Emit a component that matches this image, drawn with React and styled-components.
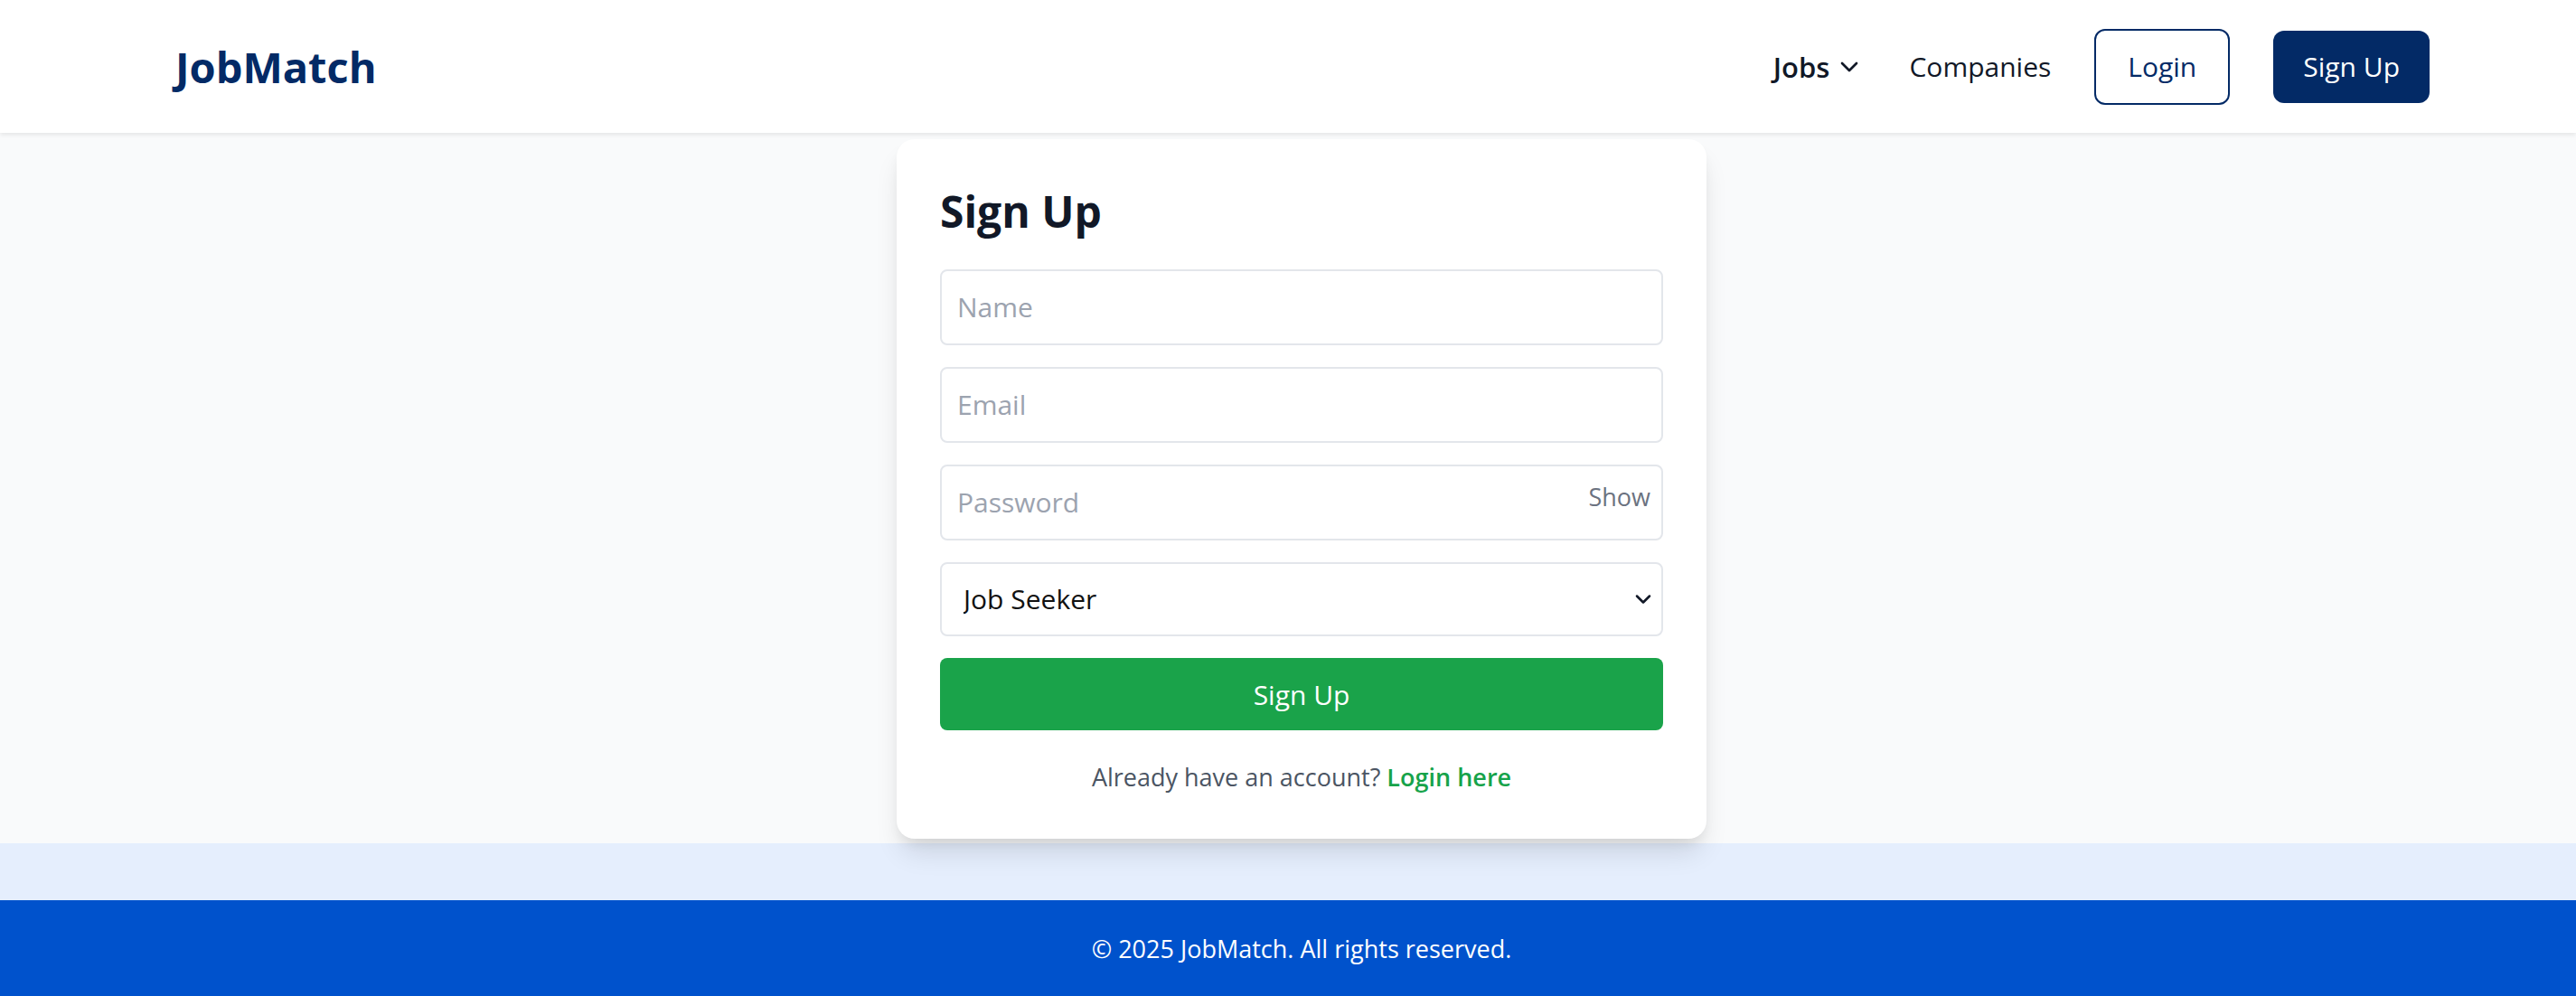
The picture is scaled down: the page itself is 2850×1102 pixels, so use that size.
import React, { useState } from "react";
import styled, { createGlobalStyle } from "styled-components";
import { ChevronDown } from "lucide-react";

const GlobalStyle = createGlobalStyle`
  body {
    margin: 0;
    font-family: "Open Sans", "Noto Sans", sans-serif;
    background: #e5eefd;
  }
  * { box-sizing: border-box; }
`;

const Page = styled.div`
  display: flex;
  flex-direction: column;
  height: 1102px;
  overflow: hidden;
`;

const Header = styled.header`
  flex: none;
  height: 147px;
  background: #fff;
  box-shadow: 0 2px 5px rgba(0, 0, 0, 0.09);
  display: flex;
  align-items: center;
  justify-content: space-between;
  padding: 0 162px 0 194px;
  position: relative;
  z-index: 2;
`;

const Logo = styled.div`
  font-size: 47px;
  font-weight: 700;
  color: #032a66;
`;

const Nav = styled.nav`
  display: flex;
  align-items: center;
  gap: 48px;
`;

const NavLink = styled.a`
  display: flex;
  align-items: center;
  gap: ${(p) => (p.$bold ? "6px" : "0")};
  font-size: ${(p) => (p.$bold ? "31px" : "30px")};
  color: #111827;
  font-weight: ${(p) => (p.$bold ? 600 : 400)};
  text-decoration: none;
  cursor: pointer;
  margin-right: ${(p) => (p.$bold ? "2px" : "0")};
`;

const NavButton = styled.button`
  font-family: inherit;
  font-size: 30px;
  line-height: 48px;
  padding: ${(p) => (p.$filled ? "16px 33px" : "16px 35px")};
  border-radius: 12px;
  border: ${(p) => (p.$filled ? "none" : "2px solid #032a66")};
  background: ${(p) => (p.$filled ? "#032a66" : "#fff")};
  color: ${(p) => (p.$filled ? "#fff" : "#032a66")};
  cursor: pointer;
`;

const Main = styled.main`
  flex: none;
  height: 786px;
  background: #f9fafb;
  display: flex;
  justify-content: center;
  align-items: flex-start;
  padding: 7px 0 0 30px;
`;

const Card = styled.div`
  position: relative;
  z-index: 1;
  width: 896px;
  background: #fff;
  border-radius: 20px;
  padding: 48px;
  box-shadow: 0 20px 30px -6px rgba(0, 0, 0, 0.12), 0 8px 14px -4px rgba(0, 0, 0, 0.07);
`;

const Title = styled.h2`
  margin: 0 0 32px;
  font-size: 48px;
  line-height: 64px;
  font-weight: 700;
  color: #111827;
`;

const Form = styled.form`
  display: flex;
  flex-direction: column;
  gap: 24px;
`;

const Field = styled.div`
  position: relative;
`;

const Input = styled.input`
  width: 100%;
  font-family: inherit;
  font-size: 30px;
  line-height: 48px;
  padding: 16px 17px;
  border: 2px solid #e3e6eb;
  border-radius: 8px;
  color: #111827;
  outline: none;
  &::placeholder { color: #9ca3af; }
`;

const ShowToggle = styled.span`
  position: absolute;
  right: 14px;
  top: 16px;
  font-size: 27px;
  line-height: 40px;
  color: #6b7280;
  cursor: pointer;
`;

const Select = styled.select`
  width: 100%;
  appearance: none;
  font-family: inherit;
  font-size: 30px;
  line-height: 48px;
  height: 82px;
  padding: 0 60px 0 24px;
  border: 2px solid #e3e6eb;
  border-radius: 8px;
  background: #fff;
  color: #111;
  outline: none;
`;

const SelectArrow = styled.span`
  position: absolute;
  right: 8px;
  top: 0;
  bottom: 0;
  display: flex;
  align-items: center;
  color: #111827;
  pointer-events: none;
`;

const SubmitButton = styled.button`
  height: 80px;
  border: none;
  border-radius: 8px;
  background: #1aa34a;
  color: #fff;
  font-family: inherit;
  font-size: 30px;
  cursor: pointer;
`;

const Bottom = styled.p`
  margin: 32px 0 0;
  text-align: center;
  font-size: 27px;
  line-height: 40px;
  color: #4b5563;
`;

const GreenLink = styled.a`
  color: #16a34a;
  font-weight: 600;
  text-decoration: none;
`;

const Band = styled.div`
  flex: none;
  height: 63px;
  background: #e5eefd;
`;

const Footer = styled.footer`
  flex: none;
  height: 106px;
  background: #0052cc;
  color: #fff;
  font-size: 27px;
  display: flex;
  align-items: center;
  justify-content: center;
  padding-left: 30px;
`;

export default function App() {
  const [show, setShow] = useState(false);

  return (
    <Page>
      <GlobalStyle />
      <Header>
        <Logo>JobMatch</Logo>
        <Nav>
          <NavLink $bold>
            Jobs
            <ChevronDown size={32} strokeWidth={2} />
          </NavLink>
          <NavLink>Companies</NavLink>
          <NavButton>Login</NavButton>
          <NavButton $filled>Sign Up</NavButton>
        </Nav>
      </Header>

      <Main>
        <Card>
          <Title>Sign Up</Title>
          <Form onSubmit={(e) => e.preventDefault()}>
            <Input type="text" placeholder="Name" />
            <Input type="email" placeholder="Email" />
            <Field>
              <Input type={show ? "text" : "password"} placeholder="Password" />
              <ShowToggle onClick={() => setShow(!show)}>{show ? "Hide" : "Show"}</ShowToggle>
            </Field>
            <Field>
              <Select defaultValue="seeker">
                <option value="seeker">Job Seeker</option>
                <option value="employer">Employer</option>
              </Select>
              <SelectArrow>
                <ChevronDown size={28} strokeWidth={2.2} />
              </SelectArrow>
            </Field>
            <SubmitButton type="submit">Sign Up</SubmitButton>
          </Form>
          <Bottom>
            Already have an account? <GreenLink>Login here</GreenLink>
          </Bottom>
        </Card>
      </Main>
      <Band />
      <Footer>© 2025 JobMatch. All rights reserved.</Footer>
    </Page>
  );
}
